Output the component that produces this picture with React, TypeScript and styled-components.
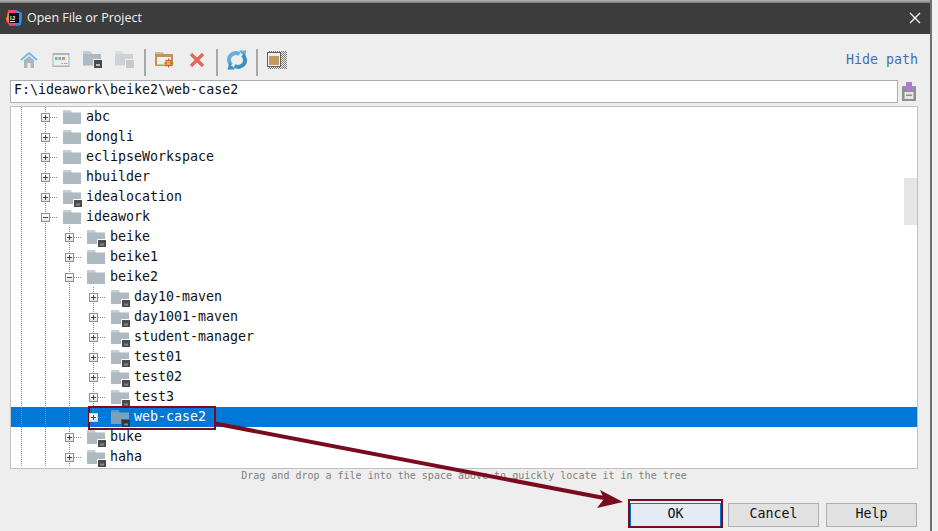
import React from 'react';
import styled, { createGlobalStyle } from 'styled-components';

const MONO = "'DejaVu Sans Mono', 'Liberation Mono', monospace";
const UI = "'Open Sans', 'Noto Sans', sans-serif";
const ROW_H = 20;
const ANNOTATION = '#7a0a1e';

const GlobalStyle = createGlobalStyle`
  html, body {
    margin: 0;
    padding: 0;
    height: 100%;
    background: #f1f1f1;
    overflow: hidden;
  }
`;

interface TreeItem {
  name: string;
  depth: number;
  guides: number;
  open?: boolean;
  badge?: boolean;
  selected?: boolean;
  lastChild?: boolean;
}

const ITEMS: TreeItem[] = [
  { name: 'abc', depth: 0, guides: 1 },
  { name: 'dongli', depth: 0, guides: 1 },
  { name: 'eclipseWorkspace', depth: 0, guides: 1 },
  { name: 'hbuilder', depth: 0, guides: 1 },
  { name: 'idealocation', depth: 0, guides: 1, badge: true },
  { name: 'ideawork', depth: 0, guides: 1, open: true },
  { name: 'beike', depth: 1, guides: 2, badge: true },
  { name: 'beike1', depth: 1, guides: 2 },
  { name: 'beike2', depth: 1, guides: 2, open: true },
  { name: 'day10-maven', depth: 2, guides: 3, badge: true },
  { name: 'day1001-maven', depth: 2, guides: 3, badge: true },
  { name: 'student-manager', depth: 2, guides: 3, badge: true },
  { name: 'test01', depth: 2, guides: 3, badge: true },
  { name: 'test02', depth: 2, guides: 3, badge: true },
  { name: 'test3', depth: 2, guides: 3, badge: true },
  { name: 'web-case2', depth: 2, guides: 3, badge: true, selected: true, lastChild: true },
  { name: 'buke', depth: 1, guides: 2, badge: true },
  { name: 'haha', depth: 1, guides: 2, badge: true },
];

const AppLogo = () => (
  <svg width="16" height="16" viewBox="0 0 16 16">
    <path d="M2 0h8l6 3-1 12-11 1-4-5z" fill="#f0457a" />
    <path d="M0 9l3-7 3 2-2 10z" fill="#f7941e" />
    <path d="M10 0l6 3-1 12-5 1z" fill="#2a8ff0" />
    <rect x="3" y="3" width="10" height="10" fill="#111" />
    <rect x="4" y="11" width="5" height="1" fill="#eee" />
    <text x="4" y="9.500" fontSize="6" fontWeight="700" fontFamily="'Liberation Sans', sans-serif" fill="#eee">IJ</text>
  </svg>
);

const CloseGlyph = () => (
  <svg width="12" height="12" viewBox="0 0 12 12">
    <path d="M1 1l10 10M11 1L1 11" stroke="#fff" strokeWidth="1.300" />
  </svg>
);

const HomeIcon = () => (
  <svg width="18" height="16" viewBox="0 0 18 16">
    <path d="M4 8l5-4 5 4v8h-3.500v-5h-3v5H4z" fill="#a9b6be" />
    <path d="M1 8l8-7 8 7" fill="none" stroke="#6fbbe6" strokeWidth="1.800" />
  </svg>
);

const WindowIcon = () => (
  <svg width="18" height="16" viewBox="0 0 18 16">
    <rect x="0.500" y="1" width="17" height="14" fill="#a9b6be" />
    <rect x="1.500" y="3" width="15" height="10.500" fill="#eceff1" />
    <rect x="3" y="5" width="2.500" height="3" fill="#6cc070" />
    <rect x="6.500" y="5" width="2.500" height="3" fill="#5cb8e0" />
    <rect x="10" y="5" width="3" height="3" fill="#f08a50" />
    <rect x="9.500" y="11" width="1.500" height="1" fill="#8a979f" />
    <rect x="12" y="11" width="1.500" height="1" fill="#8a979f" />
    <rect x="14.200" y="11" width="1.200" height="1" fill="#8a979f" />
  </svg>
);

const FolderShape = ({ body, tab }: { body: string; tab: string }) => (
  <>
    <path d="M0 0h7l2 2.500h9V14H0z" fill={body} />
    <path d="M0 0h7l2 2.500H0z" fill={tab} />
  </>
);

const BadgedFolderIcon = ({ muted }: { muted?: boolean }) => (
  <svg width="20" height="18" viewBox="0 0 20 18">
    <g transform="translate(0 0.500)">
      <FolderShape body={muted ? '#ccd2d6' : '#aebac2'} tab={muted ? '#dadfe2' : '#c2ccd2'} />
    </g>
    <rect x="10.500" y="8.500" width="9" height="9" fill={muted ? '#c8c8c8' : '#4b4b4b'} stroke="#efefef" />
    <rect x="13" y="13" width="4" height="2" fill={muted ? '#c8c8c8' : '#bbb'} />
  </svg>
);

const NewFolderIcon = () => (
  <svg width="20" height="18" viewBox="0 0 20 18">
    <path d="M0 1h7l2 2h9v12H0z" fill="#bd945a" />
    <path d="M0 1h7l2 2H0z" fill="#d8b98a" />
    <rect x="2" y="6" width="14" height="7.500" fill="#f3eee6" />
    <path d="M13.500 7l1 2.500 2.500-1-1 2.500 2.500 1-2.500 1 1 2.500-2.500-1-1 2.500-1-2.500-2.500 1 1-2.500-2.500-1 2.500-1-1-2.500 2.500 1z" fill="#d94a35" />
    <rect x="11.500" y="10" width="4" height="4" fill="#f0b040" />
  </svg>
);

const DeleteIcon = () => (
  <svg width="16" height="16" viewBox="0 0 16 16">
    <path d="M2 2l12 12M14 2L2 14" stroke="#e2685c" strokeWidth="3.200" />
  </svg>
);

const RefreshIcon = () => (
  <svg width="20" height="20" viewBox="0 0 20 20">
    <path d="M12.500 4.200A6.500 6.500 0 0 0 5 15.500" fill="none" stroke="#6aaed8" strokeWidth="4" />
    <path d="M12 0.500h7.500L17.500 8z" fill="#6aaed8" />
    <path d="M7.500 15.800A6.500 6.500 0 0 0 15 4.500" fill="none" stroke="#3f8fc4" strokeWidth="4" />
    <path d="M8 19.500H0.500L2.500 12z" fill="#3f8fc4" />
    <path d="M15.500 4L4.500 16" stroke="#eeeeee" strokeWidth="1.500" />
  </svg>
);

const StackIcon = () => (
  <svg width="20" height="18" viewBox="0 0 20 18">
    <defs>
      <pattern id="checker" width="2" height="2" patternUnits="userSpaceOnUse">
        <rect width="1" height="1" fill="#777" />
        <rect x="1" y="1" width="1" height="1" fill="#777" />
      </pattern>
    </defs>
    <rect x="1" y="0" width="19" height="18" fill="url(#checker)" />
    <rect x="0.500" y="1.500" width="13" height="14" fill="#efefef" stroke="#5f5f5f" />
    <rect x="2" y="5" width="10" height="9" fill="#c49a5c" />
  </svg>
);

const LocateIcon = () => (
  <svg width="16" height="19" viewBox="0 0 16 19">
    <rect x="1" y="5" width="14" height="14" fill="#8f8f8f" />
    <rect x="3.500" y="10" width="9" height="7" fill="#e6e6e6" />
    <rect x="5" y="12.500" width="6" height="1.500" fill="#8f8f8f" />
    <path d="M5 0h6v4h4.500L8 10.500 0.500 4H5z" fill="#aa80c6" />
  </svg>
);

const TreeFolder = ({ badge, selected }: { badge?: boolean; selected?: boolean }) => (
  <svg width="20" height="18" viewBox="0 0 20 18">
    <FolderShape body={selected ? '#7ba1bf' : '#aebac2'} tab={selected ? '#5f97c8' : '#c4ced4'} />
    {badge && (
      <>
        <rect x="10" y="9" width="9" height="9" fill={selected ? '#0078d7' : '#fff'} />
        <rect x="11" y="10" width="8" height="8" fill={selected ? '#1f3a52' : '#4b4b4b'} />
        <rect x="13" y="13.500" width="4" height="2" fill="#868686" />
      </>
    )}
  </svg>
);

const App: React.FC = () => (
  <Frame>
    <GlobalStyle />
    <TopStrip />
    <TitleBar>
      <LogoSlot>
        <AppLogo />
      </LogoSlot>
      <TitleText>Open File or Project</TitleText>
      <CloseButton>
        <CloseGlyph />
      </CloseButton>
    </TitleBar>
    <Body>
      <Toolbar>
        <ToolButton><HomeIcon /></ToolButton>
        <ToolButton><WindowIcon /></ToolButton>
        <ToolButton><BadgedFolderIcon /></ToolButton>
        <ToolButton><BadgedFolderIcon muted /></ToolButton>
        <ToolSeparator />
        <ToolButton><NewFolderIcon /></ToolButton>
        <ToolButton><DeleteIcon /></ToolButton>
        <ToolSeparator />
        <ToolButton><RefreshIcon /></ToolButton>
        <ToolSeparator />
        <ToolButton><StackIcon /></ToolButton>
        <HidePath>Hide path</HidePath>
      </Toolbar>
      <PathRow>
        <PathField>F:\ideawork\beike2\web-case2</PathField>
        <LocateButton><LocateIcon /></LocateButton>
      </PathRow>
      <TreePanel>
        {ITEMS.map((item) => (
          <TreeRow key={item.name} $selected={item.selected}>
            {Array.from({ length: item.guides }, (_, i) => (
              <Guide key={i} />
            ))}
            <Expander $half={item.lastChild}>
              <ExpanderBox $open={item.open} $selected={item.selected} />
            </Expander>
            <TreeFolderSlot>
              <TreeFolder badge={item.badge} selected={item.selected} />
            </TreeFolderSlot>
            <RowLabel $selected={item.selected}>{item.name}</RowLabel>
          </TreeRow>
        ))}
        <ScrollThumb />
      </TreePanel>
      <Hint>Drag and drop a file into the space above to quickly locate it in the tree</Hint>
      <ButtonRow>
        <DialogButton $primary>OK</DialogButton>
        <DialogButton>Cancel</DialogButton>
        <DialogButton>Help</DialogButton>
      </ButtonRow>
    </Body>
    <Annotation width="938" height="531" viewBox="0 0 938 531">
      <rect x="89" y="407" width="126" height="22" fill="none" stroke={ANNOTATION} strokeWidth="2" />
      <rect x="629" y="500" width="93" height="27" fill="none" stroke={ANNOTATION} strokeWidth="2" />
      <path d="M215 423.500L604 498" stroke={ANNOTATION} strokeWidth="4" fill="none" />
      <path d="M623 502L600 490L604 499L597 508z" fill={ANNOTATION} />
    </Annotation>
  </Frame>
);

const Frame = styled.div`
  position: relative;
  width: 930px;
  height: 531px;
  display: flex;
  flex-direction: column;
  border-right: 2px solid #6f6f6f;
  font-family: ${MONO};
`;

const TopStrip = styled.div`
  height: 3px;
  background: linear-gradient(#b5b5b5, #7a7a7a);
`;

const TitleBar = styled.div`
  height: 31px;
  flex-shrink: 0;
  display: flex;
  align-items: center;
  gap: 5px;
  padding: 0 0 0 6px;
  background: #3c3c3c;
`;

const LogoSlot = styled.div`
  height: 16px;
  margin-bottom: 1px;
`;

const TitleText = styled.span`
  font-family: ${UI};
  font-size: 12.500px;
  line-height: 16px;
  margin-bottom: 1px;
  color: #f2f2f2;
`;

const CloseButton = styled.div`
  margin-left: auto;
  width: 30px;
  display: flex;
  justify-content: center;
  margin-bottom: 1px;
`;

const Body = styled.div`
  flex: 1;
  display: flex;
  flex-direction: column;
  padding: 0 12px 0 10px;
  background: #eeeeee;
`;

const Toolbar = styled.div`
  height: 44px;
  display: flex;
  align-items: flex-start;
  padding: 15px 0 0 3px;
  box-sizing: border-box;
`;

const ToolButton = styled.div`
  width: 32px;
  height: 22px;
  display: flex;
  align-items: center;
  justify-content: center;
`;

const ToolSeparator = styled.div`
  width: 2px;
  height: 27px;
  margin: 0 3px;
  background: #a8a8a8;
`;

const HidePath = styled.span`
  margin-left: auto;
  padding-top: 3px;
  font-size: 13.300px;
  color: #466eae;
`;

const PathRow = styled.div`
  height: 23px;
  margin-top: 2px;
  display: flex;
  gap: 2px;
`;

const PathField = styled.div`
  flex: 1;
  box-sizing: border-box;
  padding: 0 3px;
  line-height: 18px;
  font-size: 13.300px;
  color: #111;
  background: #fff;
  border: 1px solid #abadb3;
`;

const LocateButton = styled.div`
  width: 18px;
  display: flex;
  align-items: center;
  justify-content: center;
`;

const TreePanel = styled.div`
  position: relative;
  height: 363px;
  margin-top: 3px;
  box-sizing: border-box;
  border: 1px solid #c0c0c0;
  background: #fff;
  overflow: hidden;
`;

const TreeRow = styled.div<{ $selected?: boolean }>`
  height: ${ROW_H}px;
  margin-left: -2px;
  display: flex;
  align-items: center;
  overflow: hidden;
  background: ${(p) => (p.$selected ? '#0078d7' : 'transparent')};
`;

const Guide = styled.div`
  position: relative;
  width: 24px;
  height: 100%;
  flex-shrink: 0;

  &::before {
    content: '';
    position: absolute;
    left: 12px;
    top: 0;
    bottom: 0;
    width: 1px;
    background: repeating-linear-gradient(#8c8c8c 0 1px, transparent 1px 2px);
  }
`;

const Expander = styled.div<{ $half?: boolean }>`
  position: relative;
  width: 24px;
  height: 100%;
  flex-shrink: 0;

  &::before {
    content: '';
    position: absolute;
    left: 12px;
    top: 0;
    bottom: ${(p) => (p.$half ? '50%' : '0')};
    width: 1px;
    background: repeating-linear-gradient(#8c8c8c 0 1px, transparent 1px 2px);
  }

  &::after {
    content: '';
    position: absolute;
    left: 17px;
    top: 10px;
    width: 7px;
    height: 1px;
    background: repeating-linear-gradient(90deg, #8c8c8c 0 1px, transparent 1px 2px);
  }
`;

const ExpanderBox = styled.div<{ $open?: boolean; $selected?: boolean }>`
  position: absolute;
  z-index: 1;
  left: 8px;
  top: 6px;
  width: 9px;
  height: 9px;
  box-sizing: border-box;
  border: 1px solid ${(p) => (p.$selected ? '#b8d4ee' : '#8e8f8f')};
  background:
    linear-gradient(#2b4a8a, #2b4a8a) center / 5px 1px no-repeat,
    ${(p) =>
      p.$open
        ? 'linear-gradient(#fff, #fff) center / 0 0 no-repeat,'
        : 'linear-gradient(#2b4a8a, #2b4a8a) center / 1px 5px no-repeat,'}
    linear-gradient(#ffffff, #e4e4e4);
`;

const TreeFolderSlot = styled.div`
  width: 20px;
  height: 18px;
  margin: 3px 3px 0 6px;
  flex-shrink: 0;
  align-self: flex-start;
`;

const RowLabel = styled.span<{ $selected?: boolean }>`
  font-size: 13.300px;
  line-height: 18px;
  color: ${(p) => (p.$selected ? '#fff' : '#111')};
`;

const ScrollThumb = styled.div`
  position: absolute;
  right: 0;
  top: 71px;
  width: 13px;
  height: 47px;
  background: #e6e6e6;
`;

const Hint = styled.div`
  height: 14px;
  line-height: 14px;
  font-size: 10px;
  color: #808080;
  text-align: center;
`;

const ButtonRow = styled.div`
  margin-top: 20px;
  padding-right: 1px;
  display: flex;
  justify-content: flex-end;
  gap: 7px;
`;

const DialogButton = styled.div<{ $primary?: boolean }>`
  width: 91px;
  height: 24px;
  box-sizing: border-box;
  padding-bottom: 3px;
  display: flex;
  align-items: center;
  justify-content: center;
  font-size: 13.300px;
  color: #111;
  background: ${(p) => (p.$primary ? '#e3ebf5' : '#e1e1e1')};
  border: 1px solid ${(p) => (p.$primary ? '#0078d7' : '#adadad')};
`;

const Annotation = styled.svg`
  position: absolute;
  left: 0;
  top: 0;
  pointer-events: none;
`;

export default App;
